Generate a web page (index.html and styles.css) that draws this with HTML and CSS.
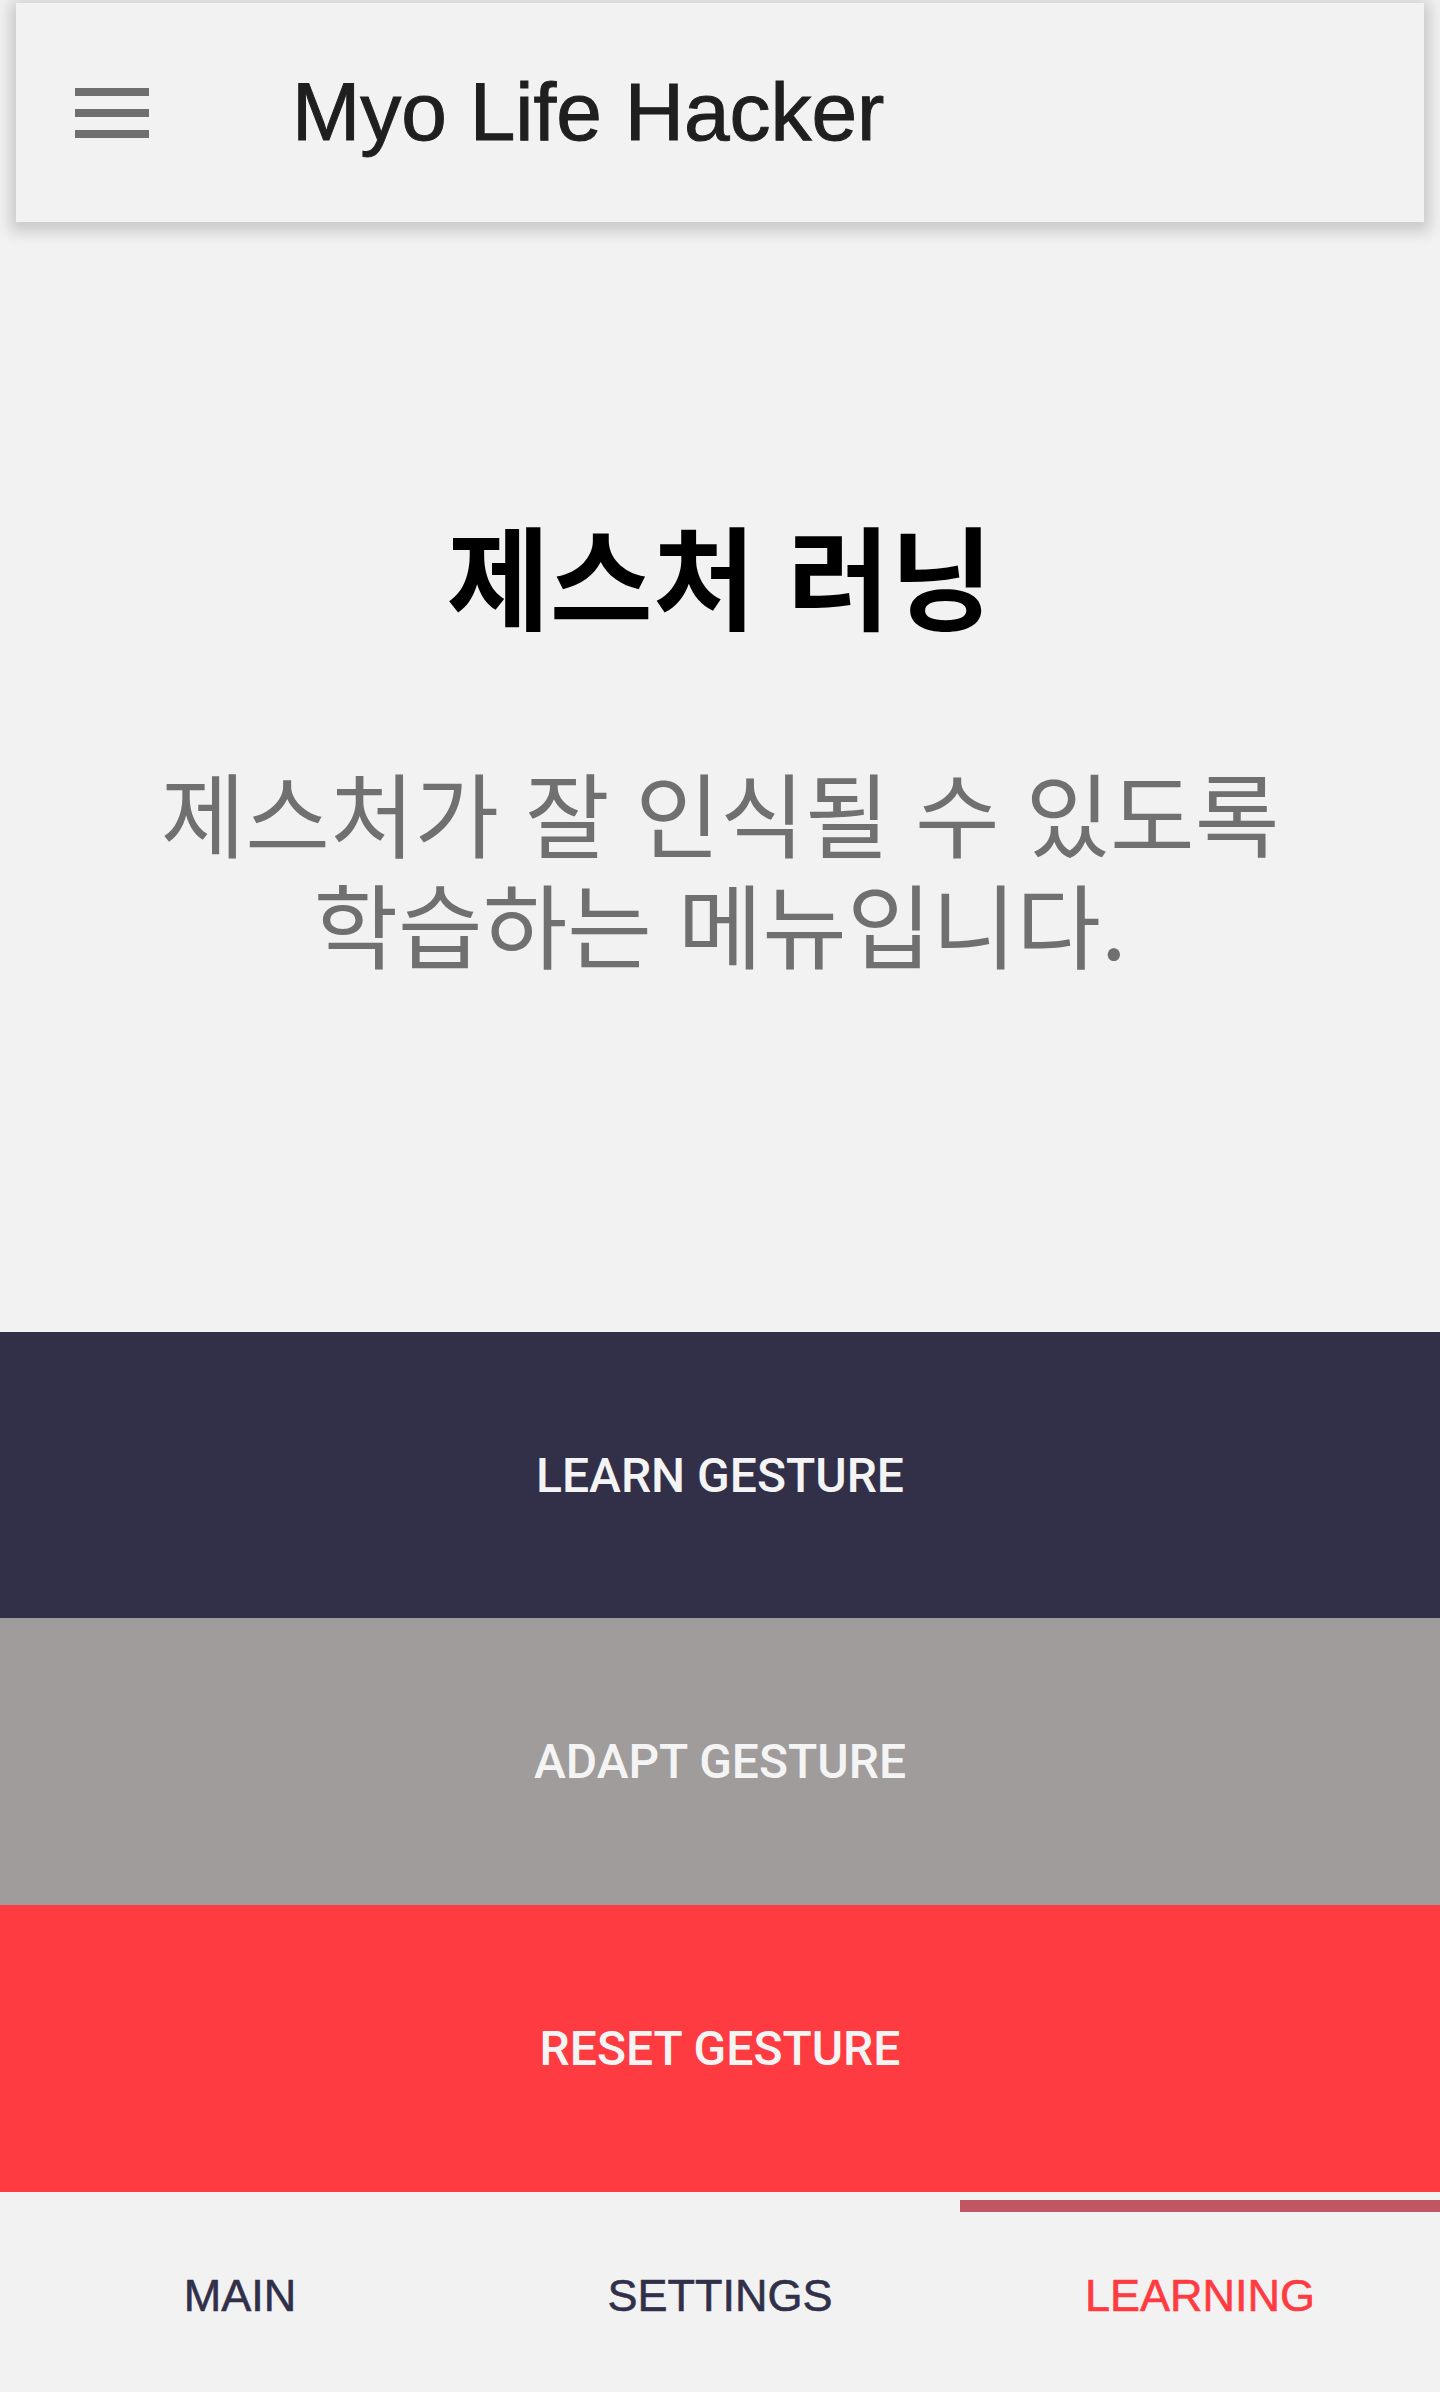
FILE: index.html
```html
<!DOCTYPE html>
<html lang="ko">
<head>
<meta charset="utf-8">
<title>Myo Life Hacker</title>
<link rel="stylesheet" href="styles.css">
</head>
<body>
<div class="app">
  <header class="topbar">
    <button class="menu" aria-label="menu">
      <svg width="74" height="50" viewBox="0 0 74 50">
        <rect x="0" y="0" width="74" height="8" fill="#6f6f6f"/>
        <rect x="0" y="21" width="74" height="8" fill="#6f6f6f"/>
        <rect x="0" y="42" width="74" height="8" fill="#6f6f6f"/>
      </svg>
    </button>
    <h1 class="app-title">Myo Life Hacker</h1>
  </header>

  <main class="content">
    <h2 class="page-title">제스처 러닝</h2>
    <p class="page-desc">제스처가 잘 인식될 수 있도록<br>학습하는 메뉴입니다.</p>
  </main>

  <section class="actions">
    <button class="action action-learn">LEARN GESTURE</button>
    <button class="action action-adapt">ADAPT GESTURE</button>
    <button class="action action-reset">RESET GESTURE</button>
  </section>

  <nav class="tabs">
    <div class="tab-indicator-row"><span class="tab-indicator"></span></div>
    <div class="tab-labels">
      <a class="tab">MAIN</a>
      <a class="tab">SETTINGS</a>
      <a class="tab tab-active">LEARNING</a>
    </div>
  </nav>
</div>
</body>
</html>
```

FILE: styles.css
```css
html, body {
  margin: 0;
  padding: 0;
  background: #f2f2f2;
}
.app {
  width: 1440px;
  height: 2392px;
  display: flex;
  flex-direction: column;
  overflow: hidden;
  background: #f2f2f2;
}
.topbar {
  margin: 3px 16px 0;
  height: 219px;
  flex: 0 0 auto;
  background: #f2f2f2;
  box-shadow: 0 4px 14px 6px rgba(0, 0, 0, 0.17);
  display: flex;
  align-items: center;
  position: relative;
  z-index: 1;
}
.menu {
  margin-left: 59px;
  padding: 0;
  border: 0;
  background: none;
  width: 74px;
  height: 50px;
  display: block;
}
.menu svg { display: block; }
.app-title {
  margin: 0 0 0 143px;
  font-family: "Liberation Sans", Arial, sans-serif;
  font-weight: normal;
  font-size: 82px;
  color: #1f1f1f;
  line-height: 1;
  padding-bottom: 2px;
  -webkit-text-stroke: 1px #1f1f1f;
}
.content {
  flex: 0 0 1110px;
  display: flex;
  flex-direction: column;
  align-items: center;
  padding-top: 281px;
  box-sizing: border-box;
}
.page-title {
  margin: 0;
  font-family: "Noto Sans CJK KR", "Noto Sans", sans-serif;
  font-weight: 700;
  font-size: 112px;
  line-height: 140px;
  color: #000;
}
.page-desc {
  margin: 112px 0 0;
  font-family: "Noto Sans CJK KR", "Noto Sans", sans-serif;
  font-weight: 400;
  font-size: 92px;
  line-height: 111px;
  color: #707070;
  text-align: center;
}
.actions {
  display: flex;
  flex-direction: column;
}
.action {
  display: flex;
  align-items: center;
  justify-content: center;
  border: 0;
  margin: 0;
  padding: 0;
  width: 100%;
  font-family: Roboto, "Liberation Sans", sans-serif;
  font-weight: 500;
  font-size: 48px;
  color: #f4f4f4;
}
.action-learn { height: 286px; background: #323049; }
.action-adapt { height: 287px; background: #a09c9b; }
.action-reset { height: 287px; background: #fe3b40; }
.tabs {
  flex: 1 1 auto;
  display: flex;
  flex-direction: column;
}
.tab-indicator-row {
  display: flex;
  justify-content: flex-end;
  padding-top: 8px;
}
.tab-indicator {
  width: 480px;
  height: 12px;
  background: #c15663;
}
.tab-labels {
  display: grid;
  grid-template-columns: repeat(3, 1fr);
  padding-top: 54px;
}
.tab {
  text-align: center;
  font-family: "Liberation Sans", Arial, sans-serif;
  font-size: 45px;
  line-height: 60px;
  color: #31304a;
  -webkit-text-stroke: 0.6px #31304a;
}
.tab-active {
  color: #fe3b40;
  -webkit-text-stroke: 0.6px #fe3b40;
}
```
